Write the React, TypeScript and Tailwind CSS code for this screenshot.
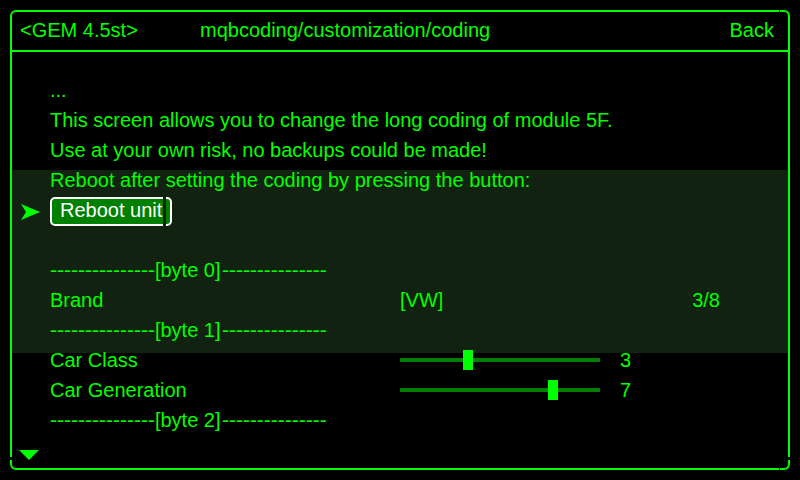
import { useState } from "react";

function Divider({ index }: { index: number }) {
  const dashes = "-".repeat(15);
  return (
    <div className="flex h-5">
      <span className="text-[21px]">{dashes}</span>
      <span className="w-[67px]">[byte {index}]</span>
      <span className="text-[21px]">{dashes}</span>
    </div>
  );
}

function SliderRow({ id, label, initial }: { id: string; label: string; initial: number }) {
  const [value, setValue] = useState(initial);
  return (
    <div className="flex h-5">
      <label htmlFor={id} className="w-[350px]">
        {label}
      </label>
      <input
        id={id}
        type="range"
        min={0}
        max={9}
        value={value}
        onChange={(e) => setValue(Number(e.target.value))}
        className="mr-5 h-5 w-[200px] appearance-none bg-transparent [&::-webkit-slider-runnable-track]:h-1 [&::-webkit-slider-runnable-track]:bg-[#008000] [&::-webkit-slider-thumb]:-mt-2 [&::-webkit-slider-thumb]:h-5 [&::-webkit-slider-thumb]:w-[10px] [&::-webkit-slider-thumb]:appearance-none [&::-webkit-slider-thumb]:bg-[#00ff00]"
      />
      <output htmlFor={id}>{value}</output>
    </div>
  );
}

const brands = ["Audi", "Seat", "VW", "Skoda", "Bentley", "Porsche", "Lamborghini", "MAN"];

export default function App() {
  const [brand, setBrand] = useState(2);
  return (
    <div className="flex min-h-screen bg-black p-[10px] font-['Liberation_Sans',Arial,sans-serif] text-[20px] leading-5 text-[#00ff00]">
      <div className="relative flex flex-1 flex-col rounded-md border-2 border-[#00ff00]">
        <span className="absolute -top-0.5 right-2 h-0.5 w-px bg-black" />
        <span className="absolute -bottom-0.5 right-2 h-0.5 w-px bg-black" />
        <span className="absolute bottom-2 -left-0.5 h-[3px] w-0.5 bg-black" />
        <span className="absolute -right-0.5 bottom-2 h-[3px] w-0.5 bg-black" />

        <header className="flex h-10 items-center border-b-2 border-[#00ff00] pr-[14px] pb-0.5 pl-2">
          <span className="w-[180px]">&lt;GEM 4.5st&gt;</span>
          <h1 className="flex-1">mqbcoding/customization/coding</h1>
          <button type="button">Back</button>
        </header>

        <main className="flex flex-1 flex-col bg-[linear-gradient(#112211,#112211)] bg-[length:100%_183px] bg-[position:0_118px] bg-no-repeat pt-7">
          <div className="flex flex-col gap-[10px] pl-[38px]">
            <button type="button" aria-label="Parent menu" className="h-5 text-left">
              ...
            </button>
            <p className="h-5">This screen allows you to change the long coding of module 5F.</p>
            <p className="h-5">Use at your own risk, no backups could be made!</p>
            <p className="h-5">Reboot after setting the coding by pressing the button:</p>
            <div className="-ml-[30px] flex h-5 items-center gap-[10px] pt-0.5">
              <svg viewBox="0 0 20 20" className="h-5 w-5 fill-[#00ff00]" aria-hidden="true">
                <path d="M1 3 20 11 1 19 6 11Z" />
              </svg>
              <button
                type="button"
                className="relative h-[29px] w-[122px] rounded-[5px] border-2 border-white bg-[#008000] pb-0.5 pl-2 text-left text-white"
              >
                Reboot unit
                <span className="absolute -inset-y-0.5 right-1 w-[3px] bg-[#112211]" />
              </button>
            </div>
            <div className="h-5" />
            <Divider index={0} />
            <div className="flex h-5 pr-[68px]">
              <span className="w-[350px]">Brand</span>
              <button type="button" aria-label="Brand" onClick={() => setBrand((brand + 1) % 8)}>
                [{brands[brand]}]
              </button>
              <span className="ml-auto">{brand + 1}/8</span>
            </div>
            <Divider index={1} />
            <SliderRow id="car-class" label="Car Class" initial={3} />
            <SliderRow id="car-generation" label="Car Generation" initial={7} />
            <Divider index={2} />
          </div>
          <svg viewBox="0 0 20 10" className="mt-auto mb-2 ml-[7px] h-[10px] w-5 fill-[#00ff00]" aria-hidden="true">
            <path d="M0 0H20L10 10Z" />
          </svg>
        </main>
      </div>
    </div>
  );
}
